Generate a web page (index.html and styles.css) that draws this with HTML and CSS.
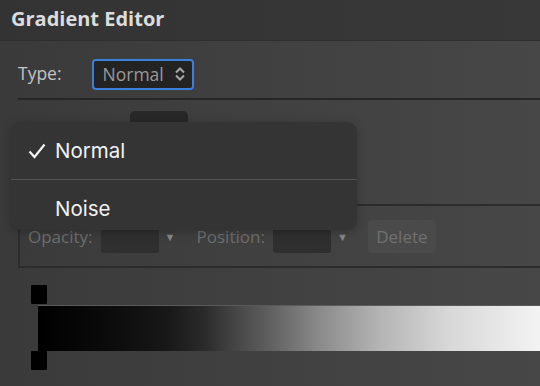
FILE: index.html
```html
<!DOCTYPE html>
<html lang="en">
<head>
  <meta charset="UTF-8">
  <title>Gradient Editor</title>
  <link rel="stylesheet" href="styles.css">
</head>
<body>
  <div class="window">
    <header class="titlebar">Gradient Editor</header>

    <div class="content">
      <div class="type-row">
        <span class="label">Type:</span>
        <div class="select">
          <span>Normal</span>
          <svg width="12" height="14" viewBox="0 0 12 14">
            <polyline points="2,5.5 6,1.5 10,5.5" fill="none" stroke="#a8a8a8" stroke-width="2"/>
            <polyline points="2,8.5 6,12.5 10,8.5" fill="none" stroke="#a8a8a8" stroke-width="2"/>
          </svg>
        </div>
      </div>

      <div class="presets">
        <div class="preset-tab"></div>
      </div>

      <div class="stops-box">
        <span class="field-label">Opacity:</span>
        <div class="field"></div>
        <span class="arrow">&#9660;</span>
        <span class="field-label">Position:</span>
        <div class="field"></div>
        <span class="arrow">&#9660;</span>
        <button class="delete">Delete</button>
      </div>

      <div class="ramp">
        <div class="stop"></div>
        <div class="bar"></div>
        <div class="stop"></div>
      </div>
    </div>

    <!-- type dropdown, open -->
    <div class="menu">
      <div class="menu-item">
        <svg class="check" width="18" height="16" viewBox="0 0 18 16">
          <polyline points="1.5,8.5 6.5,14 16.5,1.5" fill="none" stroke="#f2f2f2" stroke-width="2.2"/>
        </svg>
        <span>Normal</span>
      </div>
      <div class="menu-item">
        <span>Noise</span>
      </div>
    </div>
  </div>
</body>
</html>
```

FILE: styles.css
```css
* {
  margin: 0;
  padding: 0;
  box-sizing: border-box;
}

body {
  width: 540px;
  height: 386px;
  overflow: hidden;
  background: #3c3c3c;
  font-family: 'Open Sans', sans-serif;
}

.window {
  position: relative;
  width: 540px;
  height: 386px;
  background: linear-gradient(to right, #3a3a3a, #474747);
}

.titlebar {
  height: 41px;
  padding: 5px 0 0 11px;
  background: linear-gradient(to right, #333333, #383838);
  color: #dcdcdc;
  font-size: 20px;
  font-weight: bold;
  border-bottom: 1px solid #2e2e2e;
}

.content {
  padding: 0 0 0 18px;
}

.type-row {
  display: flex;
  align-items: center;
  gap: 30px;
  height: 59px;
  padding-top: 9px;
  border-bottom: 2px solid #262626;
}

.label {
  color: #c4c4c4;
  font-size: 17.5px;
  margin-top: -3px;
}

.select {
  display: flex;
  align-items: center;
  gap: 10px;
  width: 102px;
  height: 31px;
  padding-left: 9px;
  background: #232323;
  border: 2px solid #3d7fdc;
  border-radius: 4px;
  color: #9a9a9a;
  font-size: 17.5px;
}

.presets {
  height: 104px;
  padding: 11px 0 0 112px;
}

.preset-tab {
  width: 58px;
  height: 20px;
  background: #282828;
  border-radius: 5px 5px 0 0;
}

.stops-box {
  display: flex;
  align-items: center;
  height: 64px;
  padding-left: 8px;
  border: 2px solid #2c2c2c;
  border-right: none;
  color: #6e6e6e;
  font-size: 17px;
}

.field-label {
  margin-right: 8px;
}

.field {
  width: 58px;
  height: 32px;
  margin-top: 2px;
  background: #2f2f2f;
  border-radius: 3px;
}

.arrow {
  display: inline-block;
  width: 8px;
  font-size: 11px;
  color: #888;
  margin: 0 24px 0 6px;
}

.arrow:last-of-type {
  margin-right: 23px;
}

.delete {
  width: 68px;
  height: 33px;
  background: #4a4a4a;
  border: none;
  border-radius: 4px;
  color: #707070;
  font-family: 'Open Sans', sans-serif;
  font-size: 17px;
}

.ramp {
  display: flex;
  flex-direction: column;
  padding: 17px 0 0 13px;
}

.stop {
  width: 16px;
  height: 19px;
  background: #000;
  border-radius: 1px;
}

.bar {
  height: 46px;
  margin: 1px 0 0 7px;
  background: linear-gradient(to right, #000 0%, #0c0c0c 15%, #181818 26%, #2a2a2a 33%, #444 39%, #5f5f5f 46%, #8a8a8a 56%, #b4b4b4 68%, #d8d8d8 82%, #f3f3f3 100%);
  border-top: 1px solid #5a5a5a;
}

.menu {
  position: absolute;
  left: 11px;
  top: 122px;
  width: 346px;
  height: 108px;
  background: #343434;
  border-radius: 10px;
  box-shadow: 0 2px 10px rgba(0, 0, 0, 0.25);
  font-family: 'Inter', sans-serif;
  font-size: 20.5px;
  color: #f2f2f2;
}

.menu-item {
  display: flex;
  align-items: center;
  height: 57px;
  padding-left: 44px;
  position: relative;
}

.menu-item + .menu-item {
  height: 51px;
  border-top: 1px solid #545454;
  padding-top: 6px;
}

.check {
  position: absolute;
  left: 17px;
  top: 21px;
}
```
